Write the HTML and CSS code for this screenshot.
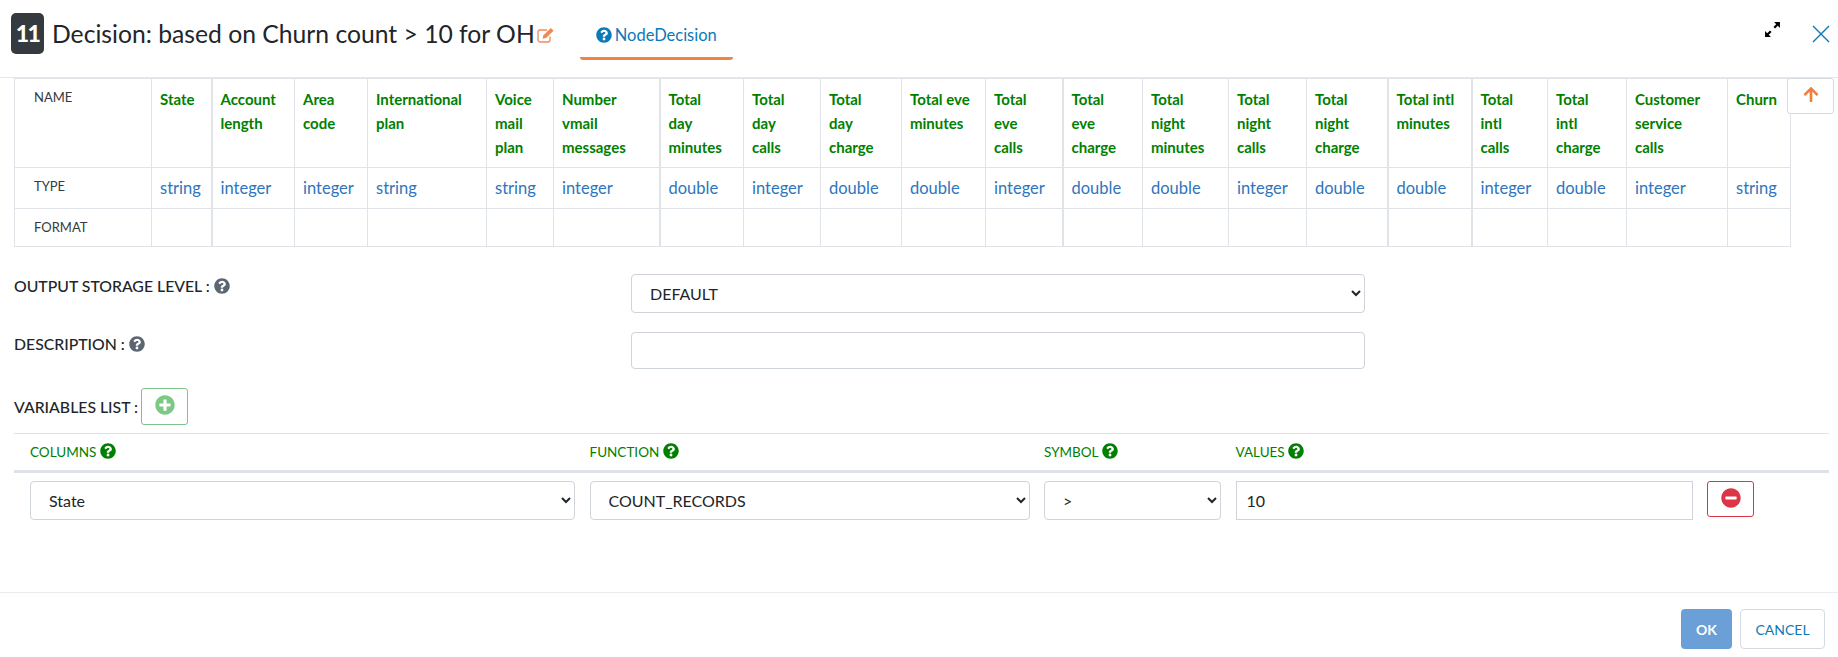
FILE: index.html
```html
<!DOCTYPE html>
<html lang="en">
  <head>
    <meta charset="UTF-8" />
    <title>Decision</title>
    <link rel="stylesheet" href="styles.css">
  </head>
  <body>
    <svg class="defs" width="0" height="0">
      <symbol id="i-help" viewBox="0 0 512 512"><path d="M504 256c0 136.997-111.043 248-248 248S8 392.997 8 256C8 119.083 119.043 8 256 8s248 111.083 248 248zM262.655 90c-54.497 0-89.255 22.957-116.549 63.758-3.536 5.286-2.353 12.415 2.715 16.258l34.699 26.31c5.205 3.947 12.621 3.008 16.665-2.122 17.864-22.658 30.113-35.797 57.303-35.797 20.429 0 45.698 13.148 45.698 32.958 0 14.976-12.363 22.667-32.534 33.976C247.128 238.528 216 254.941 216 296v4c0 6.627 5.373 12 12 12h56c6.627 0 12-5.373 12-12v-1.333c0-28.462 83.186-29.647 83.186-106.667 0-58.002-60.165-102-116.531-102zM256 338c-25.365 0-46 20.635-46 46 0 25.364 20.635 46 46 46s46-20.636 46-46c0-25.365-20.635-46-46-46z"/></symbol>
    </svg>

    <div class="modal">
      <header class="head">
        <span class="badge">11</span>
        <h1>Decision: based on Churn count &gt; 10 for OH</h1>
        <svg class="edit" viewBox="0 0 18 16"><path d="M13 9.5V13a2 2 0 0 1-2 2H3a2 2 0 0 1-2-2V5a2 2 0 0 1 2-2h7" fill="none" stroke="currentColor" stroke-width="1.3"/><path d="M6.2 8.4 13.8 1l2.8 2.8-7.5 7.3-3.3.6z" fill="currentColor"/></svg>
        <a class="tab" href="#"><svg class="icon"><use href="#i-help"/></svg>NodeDecision</a>
        <div class="head-tools">
          <svg class="expand" viewBox="0 0 16 16"><path d="M9.5 1H15v5.5l-2-2-2.6 2.6-1.5-1.5L11.5 3zM6.5 15H1V9.5l2 2 2.6-2.6 1.5 1.5L4.5 13z"/></svg>
          <svg class="close" viewBox="0 0 18 18"><path d="M1 1l16 16M17 1 1 17" fill="none" stroke="currentColor" stroke-width="1.4"/></svg>
        </div>
      </header>

      <div class="body">
        <button class="scroll-top"><svg viewBox="0 0 448 512"><path d="M34.9 289.5l-22.2-22.2c-9.4-9.4-9.4-24.6 0-33.9L207 39c9.4-9.4 24.6-9.4 33.9 0l194.3 194.3c9.4 9.4 9.4 24.6 0 33.9L413 289.4c-9.5 9.5-25 9.3-34.3-.4L264 168.6V456c0 13.3-10.7 24-24 24h-32c-13.3 0-24-10.7-24-24V168.6L69.2 289.1c-9.3 9.8-24.8 10-34.3.4z"/></svg></button>

        <table class="schema">
          <colgroup>
            <col class="c137"><col class="c60"><col class="c83"><col class="c73"><col class="c119"><col class="c67"><col class="c106">
            <col class="c84"><col class="c77"><col class="c81"><col class="c84"><col class="c77">
            <col class="c80"><col class="c86"><col class="c78"><col class="c81"><col class="c84">
            <col class="c76"><col class="c79"><col class="c101"><col class="c63">
          </colgroup>
          <tr class="names">
            <th>NAME</th>
            <td>State</td><td>Account length</td><td>Area code</td><td>International plan</td><td>Voice mail plan</td><td>Number vmail messages</td>
            <td>Total<br>day<br>minutes</td><td>Total<br>day<br>calls</td><td>Total<br>day<br>charge</td><td>Total eve minutes</td><td>Total<br>eve<br>calls</td>
            <td>Total<br>eve<br>charge</td><td>Total night minutes</td><td>Total night calls</td><td>Total night charge</td><td>Total intl minutes</td>
            <td>Total<br>intl<br>calls</td><td>Total<br>intl<br>charge</td><td>Customer<br>service<br>calls</td><td>Churn</td>
          </tr>
          <tr class="types">
            <th>TYPE</th>
            <td>string</td><td>integer</td><td>integer</td><td>string</td><td>string</td><td>integer</td>
            <td>double</td><td>integer</td><td>double</td><td>double</td><td>integer</td>
            <td>double</td><td>double</td><td>integer</td><td>double</td><td>double</td>
            <td>integer</td><td>double</td><td>integer</td><td>string</td>
          </tr>
          <tr class="formats">
            <th>FORMAT</th>
            <td></td><td></td><td></td><td></td><td></td><td></td><td></td><td></td><td></td><td></td>
            <td></td><td></td><td></td><td></td><td></td><td></td><td></td><td></td><td></td><td></td>
          </tr>
        </table>

        <div class="field first">
          <label>OUTPUT STORAGE LEVEL : <svg class="icon"><use href="#i-help"/></svg></label>
          <select><option>DEFAULT</option></select>
        </div>
        <div class="field second">
          <label>DESCRIPTION : <svg class="icon"><use href="#i-help"/></svg></label>
          <input type="text">
        </div>

        <div class="vars-title">
          <label>VARIABLES LIST :</label>
          <button class="btn-add"><svg viewBox="0 0 512 512"><path d="M256 8C119 8 8 119 8 256s111 248 248 248 248-111 248-248S393 8 256 8zm144 276c0 6.6-5.4 12-12 12h-92v92c0 6.6-5.4 12-12 12h-56c-6.6 0-12-5.4-12-12v-92h-92c-6.6 0-12-5.4-12-12v-56c0-6.6 5.4-12 12-12h92v-92c0-6.6 5.4-12 12-12h56c6.6 0 12 5.4 12 12v92h92c6.6 0 12 5.4 12 12v56z"/></svg></button>
        </div>

        <div class="vars">
          <div class="vars-row vars-head">
            <span>COLUMNS <svg class="icon"><use href="#i-help"/></svg></span>
            <span>FUNCTION <svg class="icon"><use href="#i-help"/></svg></span>
            <span>SYMBOL <svg class="icon"><use href="#i-help"/></svg></span>
            <span>VALUES <svg class="icon"><use href="#i-help"/></svg></span>
          </div>
          <div class="vars-row vars-item">
            <select><option>State</option></select>
            <select><option>COUNT_RECORDS</option></select>
            <select><option>&gt;</option></select>
            <input type="text" value="10">
            <button class="btn-remove"><svg viewBox="0 0 512 512"><path d="M256 8C119 8 8 119 8 256s111 248 248 248 248-111 248-248S393 8 256 8zM124 296c-6.6 0-12-5.4-12-12v-56c0-6.6 5.4-12 12-12h264c6.6 0 12 5.4 12 12v56c0 6.6-5.4 12-12 12H124z"/></svg></button>
          </div>
        </div>
      </div>

      <footer class="foot">
        <button class="btn-ok">OK</button>
        <button class="btn-cancel">CANCEL</button>
      </footer>
    </div>
  </body>
</html>
```

FILE: styles.css
```css
* {
  box-sizing: border-box;
}

body {
  margin: 0;
  background-color: #fff;
  color: #212529;
  font-family: "Lato", "Noto Sans", sans-serif;
  font-size: 15px;
}

.defs {
  display: block;
  height: 0;
}

.modal {
  width: 1838px;
  height: 657px;
  overflow: hidden;
}

/* header */
.head {
  display: flex;
  align-items: flex-start;
  height: 77px;
  padding: 13px 8px 0 11px;
}

.badge {
  width: 33px;
  height: 41px;
  border-radius: 5px;
  background-color: #343a40;
  color: #fff;
  font-size: 23px;
  font-weight: 900;
  letter-spacing: -1.5px;
  line-height: 41px;
  text-align: center;
}

h1 {
  margin: 6px 0 0 8px;
  font-size: 24.7px;
  font-weight: 400;
  line-height: 30px;
  color: #212529;
}

.edit {
  width: 18px;
  height: 16px;
  margin: 14px 0 0 2px;
  color: #ee8a55;
}

.tab {
  display: flex;
  align-items: center;
  justify-content: center;
  gap: 3px;
  width: 153px;
  height: 47px;
  margin-left: 25px;
  border-bottom: 3px solid #f5813f;
  border-radius: 0 0 3px 3px;
  color: #0a7ab8;
  font-size: 16.5px;
  text-decoration: none;
}

.icon {
  width: 16px;
  height: 16px;
  fill: currentColor;
  vertical-align: -2px;
}

.head-tools {
  display: flex;
  align-items: flex-start;
  gap: 31px;
  margin-left: auto;
  padding-top: 8px;
}

.expand {
  width: 17px;
  height: 17px;
  fill: #000;
}

.close {
  width: 18px;
  height: 18px;
  margin-top: 4px;
  color: #0a7ab8;
}

/* scrolling part */
.body {
  position: relative;
  height: 515px;
  padding: 0 9px 0 14px;
  border-top: 1px solid #e3e7ec;
}

.scroll-top {
  position: absolute;
  top: 0;
  right: 4px;
  width: 47px;
  height: 36px;
  padding: 0;
  border: 1px solid #d5dae0;
  border-radius: 3px;
  background-color: #fff;
}

.scroll-top svg {
  width: 16px;
  height: 17px;
  fill: #ee7f3c;
}

/* schema table */
.schema {
  table-layout: fixed;
  width: 1776px;
  border-collapse: collapse;
}

.c137 { width: 137px; }
.c60 { width: 60px; }
.c83 { width: 83px; }
.c73 { width: 73px; }
.c119 { width: 119px; }
.c67 { width: 67px; }
.c106 { width: 106px; }
.c84 { width: 84px; }
.c77 { width: 77px; }
.c81 { width: 81px; }
.c80 { width: 80px; }
.c86 { width: 86px; }
.c78 { width: 78px; }
.c76 { width: 76px; }
.c79 { width: 79px; }
.c101 { width: 101px; }
.c63 { width: 63px; }

.schema th,
.schema td {
  padding: 0 8px;
  border: 1px solid #e0e4e9;
  vertical-align: top;
  text-align: left;
}

/* some column lines come out heavier in the grid */
.schema td:nth-child(3),
.schema td:nth-child(8),
.schema td:nth-child(13),
.schema td:nth-child(17),
.schema td:nth-child(18) {
  border-left-width: 2px;
}

.schema th {
  padding-left: 19px;
  color: #343a40;
  font-size: 13px;
  font-weight: 400;
}

.names {
  height: 89px;
}

.names td {
  padding-top: 8px;
  color: #008000;
  font-size: 15px;
  font-weight: 700;
  line-height: 24px;
}

.names th {
  padding-top: 10px;
}

.types {
  height: 41px;
}

.types th,
.types td {
  padding-top: 10px;
}

.types td {
  color: #2e75bd;
  font-size: 16.5px;
}

.formats {
  height: 38px;
}

.formats th {
  padding-top: 10px;
}

/* form */
.field {
  display: grid;
  grid-template-columns: 617px 734px;
}

.field.first {
  margin-top: 27px;
}

.field.second {
  margin-top: 19px;
}

.field label,
.vars-title label {
  color: #212529;
  font-size: 15.8px;
  font-weight: 500;
}

.field label {
  padding-top: 2px;
}

.field .icon {
  color: #5c6670;
}

select,
input {
  height: 39px;
  border: 1px solid #ced4da;
  border-radius: 4px;
  background-color: #fff;
  color: #212529;
  font-family: inherit;
  font-size: 16px;
}

select {
  padding: 0 14px;
}

input {
  padding: 0 10px;
}

.field input {
  height: 37px;
}

.vars-title {
  display: flex;
  align-items: center;
  gap: 3px;
  margin-top: 19px;
}

.btn-add,
.btn-remove {
  display: flex;
  align-items: center;
  justify-content: center;
  padding: 0 0 3px;
  background-color: #fff;
  border-radius: 3px;
}

.btn-add {
  width: 47px;
  height: 37px;
  border: 1px solid #7cc48a;
}

.btn-add svg {
  width: 20px;
  height: 20px;
  fill: #7bc985;
}

/* variables list */
.vars {
  width: 1815px;
  margin-top: 8px;
  border-top: 1px solid #e0e4e9;
}

.vars-row {
  display: grid;
  grid-template-columns: 545px 440px 177px 457px 47px;
  column-gap: 14.5px;
  padding-left: 16px;
}

.vars-head {
  align-items: center;
  height: 39px;
  padding-bottom: 1px;
  border-bottom: 3px solid #dee2e6;
  color: #008000;
  font-size: 13.5px;
}

.vars-head .icon {
  color: #008000;
}

.vars-item {
  padding-top: 8px;
  align-items: start;
}

.vars-item input {
  border-radius: 0;
}

.btn-remove {
  width: 47px;
  height: 36px;
  border: 1px solid #dc3545;
}

.btn-remove svg {
  width: 20px;
  height: 20px;
  fill: #dc3545;
}

/* footer */
.foot {
  display: flex;
  justify-content: flex-end;
  gap: 8px;
  height: 65px;
  padding: 16px 13px 0 0;
  border-top: 1px solid #e9ecef;
}

.foot button {
  height: 40px;
  border-radius: 4px;
  font-family: inherit;
  font-size: 14px;
}

.btn-ok {
  width: 51px;
  border: none;
  background-color: #6a9fd8;
  color: #fff;
  font-weight: 700;
}

.btn-cancel {
  width: 85px;
  border: 1px solid #d5dae0;
  background-color: #fff;
  color: #0a7ab8;
}
```
